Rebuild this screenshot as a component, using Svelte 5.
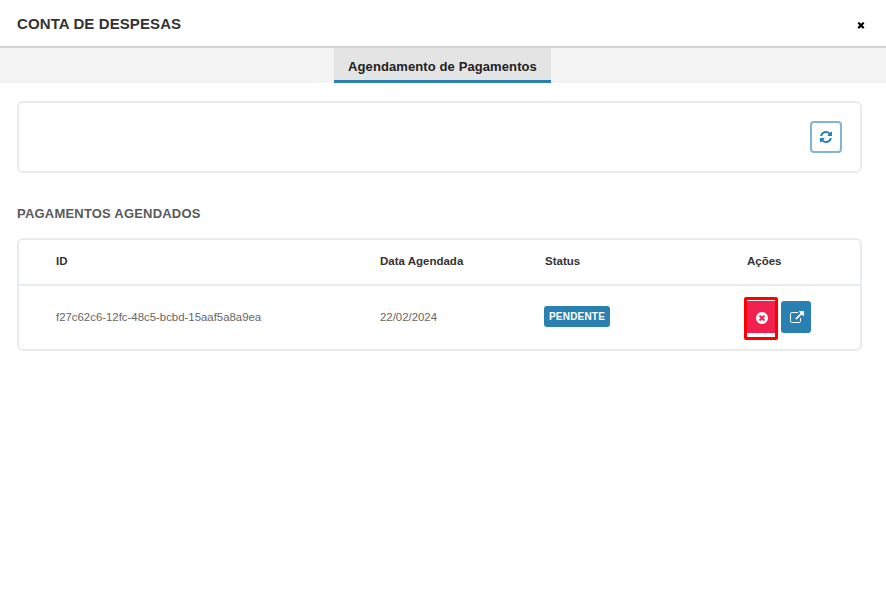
<script>
  const rows = [{ id: 'f27c62c6-12fc-48c5-bcbd-15aaf5a8a9ea', date: '22/02/2024', status: 'PENDENTE' }];
</script>

<div class="modal">
  <header class="head">
    <h1>CONTA DE DESPESAS</h1>
    <button class="close" aria-label="Fechar">
      <svg viewBox="0 0 1792 1792" width="10" height="10"><path d="M1490 1322q0 40-28 68l-136 136q-28 28-68 28t-68-28l-294-294-294 294q-28 28-68 28t-68-28l-136-136q-28-28-28-68t28-68l294-294-294-294q-28-28-28-68t28-68l136-136q28-28 68-28t68 28l294 294 294-294q28-28 68-28t68 28l136 136q28 28 28 68t-28 68l-294 294 294 294q28 28 28 68z" fill="#000"/></svg>
    </button>
  </header>

  <nav class="tabs"><div class="tab">Agendamento de Pagamentos</div></nav>

  <main class="body">
    <section class="card toolbar">
      <button class="refresh" aria-label="Atualizar">
        <svg viewBox="0 0 1792 1792" width="14" height="14"><path d="M1639 1056q0 5-1 7-64 268-268 434.500t-478 166.500q-146 0-282.500-55t-243.500-157l-129 129q-19 19-45 19t-45-19-19-45v-448q0-26 19-45t45-19h448q26 0 45 19t19 45-19 45l-137 137q71 66 161 102t187 36q134 0 250-65t186-179q11-17 53-117 8-23 30-23h192q13 0 22.500 9.500t9.500 22.500zm25-800v448q0 26-19 45t-45 19h-448q-26 0-45-19t-19-45 19-45l138-138q-148-137-349-137-134 0-250 65t-186 179q-11 17-53 117-8 23-30 23h-199q-13 0-22.500-9.500t-9.500-22.500v-7q65-268 270-434.500t480-166.500q146 0 284 55.500t245 156.500l130-129q19-19 45-19t45 19 19 45z" fill="#2a80b0"/></svg>
      </button>
    </section>

    <h2>PAGAMENTOS AGENDADOS</h2>

    <section class="card list">
      <div class="row hrow">
        <div>ID</div><div>Data Agendada</div><div class="st">Status</div><div>Ações</div>
      </div>
      {#each rows as r}
        <div class="row drow">
          <div>{r.id}</div>
          <div>{r.date}</div>
          <div class="statuscell"><span class="badge">{r.status}</span></div>
          <div class="actions">
            <span class="mark">
              <button class="btn red" aria-label="Cancelar">
                <svg viewBox="0 0 1792 1792" width="14" height="14"><path d="M1277 1122q0-26-19-45l-181-181 181-181q19-19 19-45 0-27-19-46l-90-90q-19-19-46-19-26 0-45 19l-181 181-181-181q-19-19-45-19-27 0-46 19l-90 90q-19 19-19 46 0 26 19 45l181 181-181 181q-19 19-19 45 0 27 19 46l90 90q19 19 46 19 26 0 45-19l181-181 181 181q19 19 45 19 27 0 46-19l90-90q19-19 19-46zm387-226q0 209-103 385.500t-279.500 279.500-385.500 103-385.500-103-279.500-279.500-103-385.500 103-385.500 279.500-279.500 385.500-103 385.500 103 279.500 279.500 103 385.500z" fill="#fff"/></svg>
              </button>
            </span>
            <button class="btn blue" aria-label="Abrir">
              <svg viewBox="0 0 1792 1792" width="14" height="14"><path d="M1408 928v320q0 119-84.500 203.500t-203.500 84.500h-832q-119 0-203.500-84.500t-84.500-203.500v-832q0-119 84.500-203.500t203.500-84.500h704q14 0 23 9t9 23v64q0 14-9 23t-23 9h-704q-66 0-113 47t-47 113v832q0 66 47 113t113 47h832q66 0 113-47t47-113v-320q0-14 9-23t23-9h64q14 0 23 9t9 23zm384-864v512q0 26-19 45t-45 19-45-19l-176-176-652 652q-10 10-23 10t-23-10l-114-114q-10-10-10-23t10-23l652-652-176-176q-19-19-19-45t19-45 45-19h512q26 0 45 19t19 45z" fill="#fff"/></svg>
            </button>
          </div>
        </div>
      {/each}
    </section>
  </main>
</div>

<style>
  :global(body) { margin: 0; background: #fff; font-family: "Liberation Sans", Arial, sans-serif; }
  .modal { width: 886px; }
  .head { height: 46px; border-bottom: 2px solid #d4d4d4; display: flex; align-items: center; justify-content: space-between; padding: 0 20px 0 17px; }
  h1 { margin: 0; font-size: 15px; font-weight: 700; color: #333; letter-spacing: 0.1px; }
  .close { border: 0; background: none; padding: 0; display: flex; margin-top: 3px; }
  .tabs { height: 35px; background: #f3f3f3; display: flex; justify-content: center; }
  .tab { box-sizing: border-box; width: 217px; margin-left: -1px; height: 35px; background: #e4e4e4; border-bottom: 3px solid #2a80b0; font-size: 13px; font-weight: 700; color: #222; letter-spacing: 0.1px; display: flex; align-items: center; justify-content: center; padding-top: 4px; }
  .body { padding: 18px 24px 0 17px; }
  .card { border: 2px solid #e8ecef; border-radius: 6px; box-sizing: border-box; }
  .toolbar { height: 72px; display: flex; align-items: center; justify-content: flex-end; padding-right: 18px; }
  .refresh { box-sizing: border-box; width: 32px; height: 32px; border: 2px solid #7fb6d4; border-radius: 4px; background: #fff; padding: 0; display: flex; align-items: center; justify-content: center; }
  h2 { margin: 33px 0 16px; font-size: 13px; line-height: 16px; font-weight: 700; color: #5a5a5a; letter-spacing: 0.2px; }
  .list { height: 113px; }
  .row { display: grid; grid-template-columns: 324px 164px 203px 1fr; padding-left: 37px; align-items: center; }
  .hrow { height: 41px; padding-bottom: 3px; border-bottom: 2px solid #e8ecef; font-size: 11.5px; font-weight: 700; color: #333; }
  .st { margin-left: 1px; }
  .drow { height: 63px; padding-bottom: 2px; box-sizing: border-box; font-size: 11.4px; color: #666; }
  .statuscell { display: flex; }
  .badge { height: 21px; line-height: 21px; padding: 0 5px; background: #2a80b0; color: #fff; border-radius: 3px; font-size: 10px; font-weight: 700; letter-spacing: 0.2px; }
  .actions { display: flex; align-self: start; align-items: flex-start; margin: 11px 0 0 -3px; gap: 3px; }
  .mark { box-sizing: border-box; width: 34px; height: 43px; border: 3px solid #ff0000; border-radius: 2px; background: #fff; display: block; padding-top: 1px; }
  .btn { border: 0; padding: 0; display: flex; align-items: center; justify-content: center; border-radius: 3px; }
  .red { width: 100%; height: 32px; padding: 1px 0 0 1px; background: #f0204f; border-radius: 0; }
  .blue { width: 30px; height: 32px; padding: 1px 0 0 1px; background: #2a80b0; margin-top: 4px; }
</style>
